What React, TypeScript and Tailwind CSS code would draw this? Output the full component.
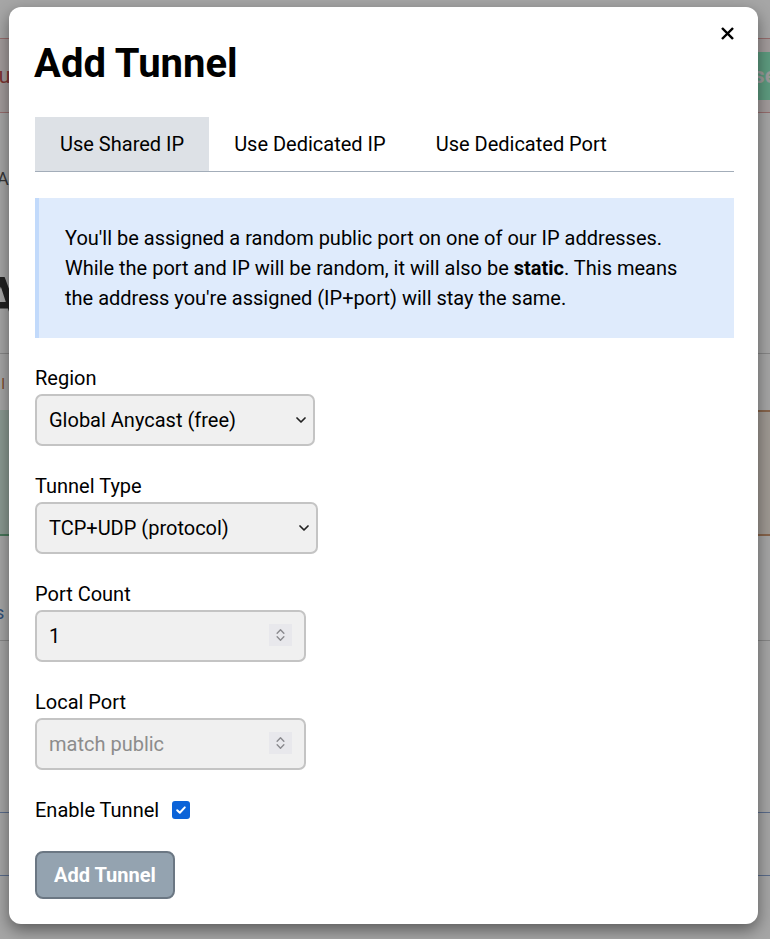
import React from "react";

const FIELD =
  "h-[52px] rounded-[7px] border-2 border-[#c4c4c4] bg-[#f0f0f0] pl-[12px] text-[20px] text-black outline-none";

function Chevron({ className = "" }: { className?: string }) {
  return (
    <svg
      viewBox="0 0 10 6"
      className={className}
      fill="none"
      stroke="currentColor"
      strokeWidth="1.7"
      strokeLinecap="round"
      strokeLinejoin="round"
    >
      <path d="M1 1l4 4 4-4" />
    </svg>
  );
}

function Spinner() {
  return (
    <span className="pointer-events-none absolute right-[14px] top-[14px] flex h-[22px] w-[23px] flex-col items-center justify-center gap-[2px] bg-[#e8e8ec] text-[#8a8a8e]">
      <Chevron className="h-[5px] w-[9px] rotate-180" />
      <Chevron className="h-[5px] w-[9px]" />
    </span>
  );
}

function SelectField({
  label,
  value,
  width,
}: {
  label: string;
  value: string;
  width: string;
}) {
  return (
    <div className="mt-[26px]">
      <label className="mb-[2px] block text-[20px] leading-[28px] text-black">{label}</label>
      <div className={`relative ${width}`}>
        <select className={`${FIELD} w-full appearance-none`} defaultValue={value}>
          <option>{value}</option>
        </select>
        <Chevron className="pointer-events-none absolute right-[9px] top-[23px] h-[6px] w-[10px] text-[#222]" />
      </div>
    </div>
  );
}

function NumberField({
  label,
  value,
  placeholder,
}: {
  label: string;
  value?: string;
  placeholder?: string;
}) {
  return (
    <div className="mt-[26px]">
      <label className="mb-[2px] block text-[20px] leading-[28px] text-black">{label}</label>
      <div className="relative w-[271px]">
        <input
          type="text"
          defaultValue={value}
          placeholder={placeholder}
          className={`${FIELD} w-full placeholder:text-[#8c8c8c]`}
        />
        <Spinner />
      </div>
    </div>
  );
}

function BackgroundPage() {
  return (
    <div className="flex flex-col text-[16px]">
      <div className="mt-[38px] flex h-[75px] items-center justify-between border-y border-[#e6a8a8] bg-[#fbf0f0]">
        <span className="-ml-[26px] text-[22px] text-[#c0504d]">Tour</span>
        <span className="mr-[-30px] flex h-[48px] items-center rounded bg-[#90efc3] px-4 text-[22px] font-bold text-[#f0f0f0]">
          Reset
        </span>
      </div>
      <span className="mt-[52px] -ml-[3px] text-[18px] text-[#555]">A</span>
      <span className="mt-[78px] -ml-[18px] text-[56px] font-bold leading-none text-[#333]">AA</span>
      <div className="mt-[27px] border-t border-[#cfcfcf]" />
      <span className="mt-[20px] -ml-[6px] text-[14px] text-[#c0703d]">
        <span className="text-[#4a7ab8]">·</span> I
      </span>
      <div className="mt-[15px] flex h-[126px]">
        <div className="w-1/2 border-b-2 border-[#6fb58a] bg-[#d6ede0]" />
        <div className="w-1/2 border-y-2 border-[#d09a74] bg-[#f4ebe2]" />
      </div>
      <span className="mt-[63px] -ml-[5px] text-[18px] text-[#4a7ab8]">s</span>
      <div className="mt-[14px] border-t border-[#cfcfcf]" />
      <div className="mt-[171px] border-t border-[#8aa6d6]" />
      <div className="mt-[62px] border-t border-[#8aa6d6]" />
    </div>
  );
}

export default function App() {
  return (
    <div className="relative h-[939px] w-full overflow-hidden bg-white font-['Roboto',sans-serif]">
      <BackgroundPage />
      <div className="absolute inset-0 bg-black/35 pl-[9px] pt-[7px]">
        <div className="relative w-[749px] rounded-[12px] bg-white pb-[25px] pl-[26px] pr-[24px] pt-[33px] shadow-[0_6px_16px_rgba(0,0,0,0.45)]">
          <button className="absolute right-[24px] top-[20px] text-black" aria-label="Close">
            <svg viewBox="0 0 14 14" className="h-[13px] w-[13px]" stroke="currentColor" strokeWidth="2.6" strokeLinecap="square">
              <path d="M2 2l10 10M12 2L2 12" />
            </svg>
          </button>

          <h1 className="-ml-px text-[40px] font-bold leading-[48px] text-black">Add Tunnel</h1>

          <div className="mt-[29px] flex border-b border-[#a3adb9] text-[20px] leading-[30px] text-black">
            <button className="bg-[#dde1e6] px-[25px] py-3">Use Shared IP</button>
            <button className="px-[25px] py-3">Use Dedicated IP</button>
            <button className="px-[25px] py-3">Use Dedicated Port</button>
          </div>

          <div className="mt-[26px] border-l-4 border-[#c2dafb] bg-[#dfebfc] py-[25px] pl-[26px] pr-[30px] text-[20px] leading-[30px] text-black">
            You'll be assigned a random public port on one of our IP addresses. While the port and IP
            will be random, it will also be <b>static</b>. This means the address you're assigned
            (IP+port) will stay the same.
          </div>

          <SelectField label="Region" value="Global Anycast (free)" width="w-[280px]" />
          <SelectField label="Tunnel Type" value="TCP+UDP (protocol)" width="w-[283px]" />
          <NumberField label="Port Count" value="1" />
          <NumberField label="Local Port" placeholder="match public" />

          <div className="mt-[26px] flex items-center gap-[13px] text-[20px] leading-[28px] text-black">
            <span>Enable Tunnel</span>
            <span className="flex h-[18px] w-[18px] items-center justify-center rounded-[3px] bg-[#0b63d8]">
              <svg viewBox="0 0 12 12" className="h-[12px] w-[12px]" fill="none" stroke="white" strokeWidth="2" strokeLinecap="round" strokeLinejoin="round">
                <path d="M2.2 6.3l2.6 2.5 5-5.4" />
              </svg>
            </span>
          </div>

          <button className="mt-[27px] h-[48px] rounded-[8px] border-2 border-[#6b7783] bg-[#94a3b0] px-[17px] text-[20px] font-bold text-white">
            Add Tunnel
          </button>
        </div>
      </div>
    </div>
  );
}
